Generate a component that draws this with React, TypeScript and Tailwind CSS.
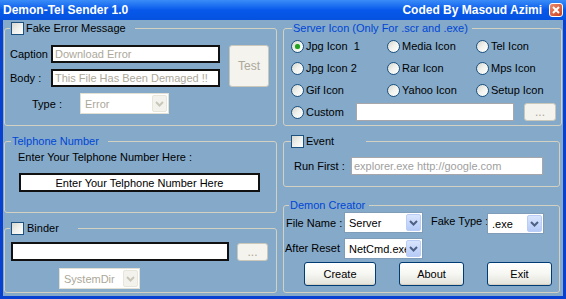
import clsx from "clsx";

function XpCheck() {
  return (
    <span className="inline-block h-[13px] w-[13px] shrink-0 border border-[#1c5180] bg-gradient-to-br from-[#d8d8d2] via-[#f0f0ec] to-white" />
  );
}

function XpRadio({ checked }: { checked?: boolean }) {
  return (
    <span className="flex h-[13px] w-[13px] shrink-0 items-center justify-center rounded-full border border-[#1c5180] bg-gradient-to-br from-[#d6d6d0] via-[#f2f2ee] to-white">
      {checked && <span className="h-[5px] w-[5px] rounded-full bg-[#21a121] shadow-[0_0_1px_#5fd35f]" />}
    </span>
  );
}

function Chevron({ disabled }: { disabled?: boolean }) {
  return (
    <svg width="9" height="6" viewBox="0 0 9 6">
      <path d="M1 1l3.5 3.5L8 1" fill="none" stroke={disabled ? "#c9c7ba" : "#4d6185"} strokeWidth="2" />
    </svg>
  );
}

function XpSelect({ value, className, disabled }: { value: string; className: string; disabled?: boolean }) {
  return (
    <div
      className={clsx(
        "flex shrink-0 items-stretch border bg-white p-[1px]",
        disabled ? "border-[#e2e0d2] text-[#aca899]" : "border-[#7f9db9] text-black",
        className
      )}
    >
      <span className="flex flex-1 items-center overflow-hidden whitespace-nowrap pl-[3px]">{value}</span>
      <span
        className={clsx(
          "flex w-[15px] shrink-0 items-center justify-center rounded-[2px] border",
          disabled ? "border-[#e8e6da] bg-[#f3f2ec]" : "border-[#b9cdf6] bg-gradient-to-b from-[#d9e5fd] to-[#b6cbf7]"
        )}
      >
        <Chevron disabled={disabled} />
      </span>
    </div>
  );
}

function XpButton({ label, className }: { label: string; className: string }) {
  return (
    <div
      className={clsx(
        "flex items-center justify-center rounded-[3px] border border-[#003c74] bg-gradient-to-b from-white via-[#f6f6f2] to-[#e3e2da] text-black shadow-[inset_0_-1px_0_#d6d0c5]",
        className
      )}
    >
      {label}
    </div>
  );
}

function DisabledButton({ label, className }: { label: string; className: string }) {
  return (
    <div
      className={clsx(
        "flex items-center justify-center rounded-[3px] border border-[#cac8bb] bg-[#f4f3ee] text-[12px] text-[#aca899]",
        className
      )}
    >
      {label}
    </div>
  );
}

const box = "border-2 border-[#111] bg-white";

export default function App() {
  return (
    <div className="flex h-[299px] w-[566px] flex-col whitespace-nowrap bg-[#0841d0] font-['Liberation_Sans',Arial,sans-serif] text-[11px] leading-[14px] text-black">
      {/* title bar */}
      <div className="flex h-[20px] items-center bg-gradient-to-b from-[#3a8cf8] via-[#0758ea] to-[#0552e0] pl-[3px] pr-[3px] text-[12px] font-bold text-white">
        <span className="flex-1 pb-[1px]">Demon-Tel Sender 1.0</span>
        <span className="pb-[1px]">Coded By Masoud Azimi</span>
        <span className="ml-[7px] flex h-[14px] w-[14px] items-center justify-center rounded-[3px] border border-white bg-gradient-to-br from-[#eb8a6c] to-[#c7401c]">
          <svg width="8" height="8" viewBox="0 0 8 8">
            <path d="M1 1l6 6M7 1L1 7" stroke="white" strokeWidth="2" />
          </svg>
        </span>
      </div>

      {/* body */}
      <div className="mx-[3px] mb-[3px] flex flex-1 gap-[6px] bg-[#84a9c9] pl-[1px]">
        {/* left column */}
        <div className="flex w-[273px] flex-col">
          <fieldset className="mt-[1px] h-[105px] rounded-[3px] border border-[#d3d1c2]">
            <legend className="ml-[5px] flex h-[14px] items-center pl-[1px] pr-[9px]">
              <XpCheck />
              <span className="ml-[2px]">Fake Error Message</span>
            </legend>
            <div className="flex flex-col pl-[5px] pt-[10px]">
              <div className="flex gap-[9px]">
                <div className="flex flex-col gap-[6px]">
                  <div className="flex items-center">
                    <span className="w-[41px]">Caption</span>
                    <div className={clsx(box, "flex h-[18px] w-[169px] items-center pl-[2px] text-[#aca899]")}>Download Error</div>
                  </div>
                  <div className="flex items-center">
                    <span className="w-[41px]">Body :</span>
                    <div className={clsx(box, "flex h-[18px] w-[169px] items-center pl-[2px] text-[#aca899]")}>This File Has Been Demaged !!</div>
                  </div>
                </div>
                <DisabledButton label="Test" className="h-[42px] w-[40px]" />
              </div>
              <div className="mt-[6px] flex items-center pl-[22px]">
                <span className="w-[48px]">Type :</span>
                <XpSelect value="Error" disabled className="h-[21px] w-[89px]" />
              </div>
            </div>
          </fieldset>

          <fieldset className="mt-[8px] h-[79px] rounded-[3px] border border-[#d3d1c2]">
            <legend className="ml-[6px] flex h-[14px] items-center pl-[1px] pr-[9px] text-[#0046d5]">Telphone Number</legend>
            <div className="flex flex-col pl-[13px] pt-[2px]">
              <span>Enter Your Telphone Number Here :</span>
              <div className={clsx(box, "ml-[1px] mt-[9px] flex h-[19px] w-[241px] items-center justify-center")}>
                Enter Your Telphone Number Here
              </div>
            </div>
          </fieldset>

          <fieldset className="mt-[8px] h-[72px] rounded-[3px] border border-[#d3d1c2]">
            <legend className="ml-[5px] flex h-[14px] items-center pl-[1px] pr-[19px]">
              <XpCheck />
              <span className="ml-[3px]">Binder</span>
            </legend>
            <div className="flex flex-col pl-[6px] pt-[7px]">
              <div className="flex items-start gap-[8px]">
                <div className={clsx(box, "h-[19px] w-[218px]")} />
                <DisabledButton label="..." className="mt-[1px] h-[18px] w-[31px]" />
              </div>
              <XpSelect value="SystemDir" disabled className="ml-[48px] mt-[7px] h-[21px] w-[81px]" />
            </div>
          </fieldset>
        </div>

        {/* right column */}
        <div className="flex w-[279px] flex-col">
          <fieldset className="mt-[1px] h-[105px] rounded-[3px] border border-[#d3d1c2]">
            <legend className="ml-[8px] flex h-[14px] items-center pl-[1px] pr-[4px] text-[#0046d5]">
              Server Icon (Only For .scr and .exe)
            </legend>
            <div className="flex flex-col pl-[7px]">
              {[
                ["Jpg Icon  1", "Media Icon", "Tel Icon"],
                ["Jpg Icon 2", "Rar Icon", "Mps Icon"],
                ["Gif Icon", "Yahoo Icon", "Setup Icon"],
              ].map((row, r) => (
                <div key={r} className="flex h-[22px] items-center">
                  {row.map((label, c) => (
                    <div key={c} className={clsx("flex items-center gap-[2px]", c === 0 ? "w-[96px]" : c === 1 ? "w-[89px]" : "")}>
                      <XpRadio checked={r === 0 && c === 0} />
                      <span className="whitespace-pre">{label}</span>
                    </div>
                  ))}
                </div>
              ))}
              <div className="flex h-[22px] items-center">
                <div className="flex w-[65px] items-center gap-[2px]">
                  <XpRadio />
                  <span>Custom</span>
                </div>
                <div className="h-[18px] w-[158px] border border-[#a7a6aa] bg-white" />
                <DisabledButton label="..." className="ml-[10px] h-[18px] w-[32px]" />
              </div>
            </div>
          </fieldset>

          <fieldset className="mt-[8px] h-[53px] w-[277px] rounded-[3px] border border-[#d3d1c2]">
            <legend className="ml-[7px] flex h-[14px] items-center pr-[32px]">
              <XpCheck />
              <span className="ml-[2px]">Event</span>
            </legend>
            <div className="flex items-center pl-[10px] pt-[9px]">
              <span className="w-[57px]">Run First :</span>
              <div className="flex h-[18px] w-[192px] items-center border border-[#a7a6aa] bg-white pl-[2px] text-[#a0a0a0]">
                explorer.exe http://google.com
              </div>
            </div>
          </fieldset>

          <fieldset className="mt-[11px] h-[95px] w-[277px] rounded-[3px] border border-[#d3d1c2]">
            <legend className="ml-[5px] flex h-[14px] items-center pl-[1px] pr-[4px] text-[#0046d5]">Demon Creator</legend>
            <div className="flex flex-col">
              <div className="flex items-start">
                <span className="mt-[4px] w-[60px] shrink-0 pl-[2px]">File Name :</span>
                <XpSelect value="Server" className="h-[21px] w-[79px]" />
                <span className="ml-[8px] mt-[2px] w-[56px] shrink-0">Fake Type :</span>
                <XpSelect value=".exe" className="mt-[1px] h-[21px] w-[57px]" />
              </div>
              <div className="mt-[4px] flex items-start">
                <span className="mt-[3px] w-[60px] shrink-0 pl-[1px]">After Reset</span>
                <XpSelect value="NetCmd.exe" className="h-[21px] w-[79px]" />
              </div>
              <div className="mt-[3px] flex pl-[20px]">
                <XpButton label="Create" className="h-[24px] w-[72px]" />
                <XpButton label="About" className="ml-[23px] h-[24px] w-[65px]" />
                <XpButton label="Exit" className="ml-[23px] h-[24px] w-[65px]" />
              </div>
            </div>
          </fieldset>
        </div>
      </div>
    </div>
  );
}
